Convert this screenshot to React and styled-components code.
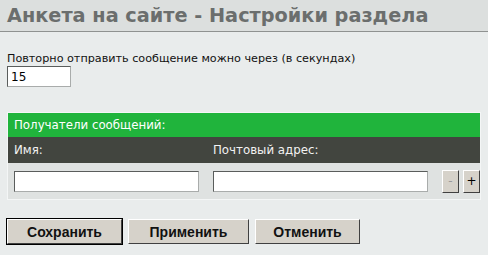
import styled, { createGlobalStyle } from "styled-components";

const GlobalStyle = createGlobalStyle`
  html, body {
    margin: 0;
    padding: 0;
    background: #e9ecec;
  }
  body {
    font-family: "DejaVu Sans", Tahoma, sans-serif;
    font-size: 11.2px;
  }
`;

const Page = styled.div`
  width: 488px;
  height: 255px;
  background: #e9ecec;
`;

const Header = styled.div`
  height: 31px;
  background: #dcdfde;
  border-bottom: 1px solid #8f9291;
  padding-left: 7px;
  display: flex;
  align-items: center;
`;

const Title = styled.h1`
  margin: 0;
  font-family: "DejaVu Sans", Tahoma, sans-serif;
  font-size: 19.3px;
  font-weight: bold;
  color: #6b6e6d;
`;

const Content = styled.div`
  padding: 20px 7px 0;
`;

const Label = styled.div`
  color: #111;
  line-height: 14px;
`;

const TextInput = styled.input`
  box-sizing: border-box;
  display: block;
  width: ${(p) => p.$width}px;
  height: 21px;
  margin: 0;
  padding: 2px 3px;
  border: 1px solid #a9acab;
  border-top-color: #5a5d5c;
  border-left-color: #5a5d5c;
  background: #fff;
  font-family: "DejaVu Sans", Tahoma, sans-serif;
  font-size: 12px;
  color: #000;
`;

const Table = styled.div`
  margin-top: 25px;
  border: 1px solid #f4f6f6;
  font-size: 11.8px;
`;

const Caption = styled.div`
  height: 24px;
  background: #20b43c;
  color: #fff;
  padding-left: 6px;
  display: flex;
  align-items: center;
`;

const HeadRow = styled.div`
  height: 26px;
  background: #42453f;
  color: #f2f2f2;
  display: grid;
  grid-template-columns: 199px 1fr;
  align-items: center;
  padding-left: 6px;
`;

const Row = styled.div`
  height: 36px;
  background: #dfe2e1;
  display: flex;
  align-items: center;
  padding-left: 6px;
  gap: 14px;
`;

const Mini = styled.button`
  box-sizing: border-box;
  width: 17px;
  height: 23px;
  padding: 0;
  background: #d6d2ca;
  border: 1px solid;
  border-color: #fff #404040 #404040 #fff;
  font-family: "DejaVu Sans", Tahoma, sans-serif;
  font-size: 12px;
  color: ${(p) => (p.$muted ? "#9a9a9a" : "#000")};
`;

const MiniGroup = styled.div`
  display: flex;
  gap: 4px;
`;

const Actions = styled.div`
  display: flex;
  gap: 6px;
  margin-top: 19px;
`;

const Button = styled.button`
  box-sizing: border-box;
  width: ${(p) => p.$width}px;
  height: 25px;
  padding: 0;
  background: #d6d2ca;
  border: 1px solid;
  border-color: #fff #404040 #404040 #fff;
  outline: ${(p) => (p.$default ? "1px solid #000" : "none")};
  outline-offset: 0;
  font-family: "Liberation Sans", Arial, sans-serif;
  font-size: 14px;
  font-weight: bold;
  color: #111;
`;

export default function App() {
  return (
    <Page>
      <GlobalStyle />
      <Header>
        <Title>Анкета на сайте - Настройки раздела</Title>
      </Header>
      <Content>
        <Label>Повторно отправить сообщение можно через (в секундах)</Label>
        <TextInput $width={64} defaultValue="15" />
        <Table>
          <Caption>Получатели сообщений:</Caption>
          <HeadRow>
            <span>Имя:</span>
            <span>Почтовый адрес:</span>
          </HeadRow>
          <Row>
            <TextInput $width={185} />
            <TextInput $width={215} />
            <MiniGroup>
              <Mini $muted>-</Mini>
              <Mini>+</Mini>
            </MiniGroup>
          </Row>
        </Table>
        <Actions>
          <Button $width={115} $default>Сохранить</Button>
          <Button $width={121}>Применить</Button>
          <Button $width={105}>Отменить</Button>
        </Actions>
      </Content>
    </Page>
  );
}
